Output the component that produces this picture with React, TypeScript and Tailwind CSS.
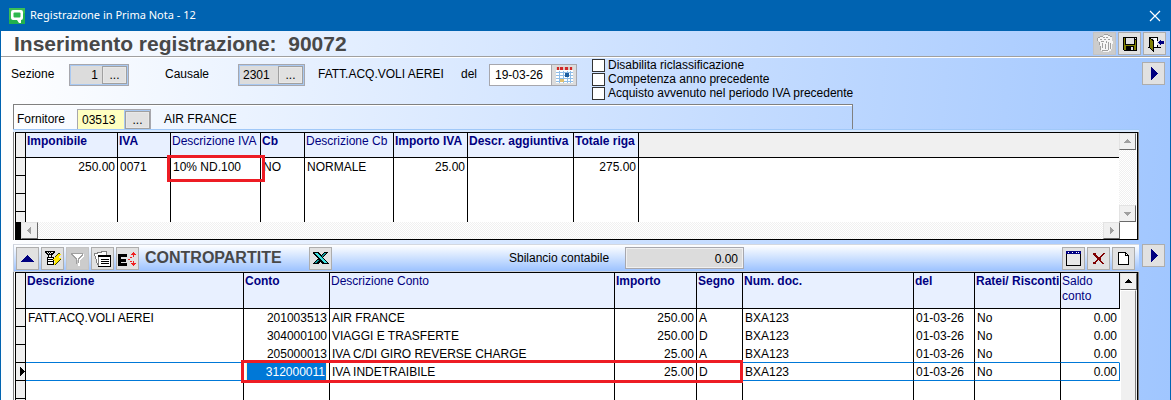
import type { ReactNode } from 'react';
import clsx from 'clsx';

type Column = {
  title: string;
  width: string;
  bold?: boolean;
  right?: boolean;
};

const ivaColumns: Column[] = [
  { title: 'Imponibile', width: 'w-[92px]', bold: true, right: true },
  { title: 'IVA', width: 'w-[53px]', bold: true },
  { title: 'Descrizione IVA', width: 'w-[90px]' },
  { title: 'Cb', width: 'w-[44px]', bold: true },
  { title: 'Descrizione Cb', width: 'w-[89px]' },
  { title: 'Importo IVA', width: 'w-[74px]', bold: true, right: true },
  { title: 'Descr. aggiuntiva', width: 'w-[106px]', bold: true },
  { title: 'Totale riga', width: 'w-[65px]', bold: true, right: true },
];

const ivaRow = ['250.00', '0071', '10% ND.100', 'NO', 'NORMALE', '25.00', '', '275.00'];

const contoColumns: Column[] = [
  { title: 'Descrizione', width: 'w-[218px]', bold: true },
  { title: 'Conto', width: 'w-[86px]', bold: true, right: true },
  { title: 'Descrizione Conto', width: 'w-[285px]' },
  { title: 'Importo', width: 'w-[82px]', bold: true, right: true },
  { title: 'Segno', width: 'w-[46px]', bold: true },
  { title: 'Num. doc.', width: 'w-auto', bold: true },
  { title: 'del', width: 'w-[61px]', bold: true },
  { title: 'Ratei/ Risconti', width: 'w-[86px]', bold: true },
  { title: 'Saldo conto', width: 'w-[59px]', right: true },
];

const contoRows = [
  ['FATT.ACQ.VOLI AEREI', '201003513', 'AIR FRANCE', '250.00', 'A', 'BXA123', '01-03-26', 'No', '0.00'],
  ['', '304000100', 'VIAGGI E TRASFERTE', '250.00', 'D', 'BXA123', '01-03-26', 'No', '0.00'],
  ['', '205000013', 'IVA C/DI GIRO REVERSE CHARGE', '25.00', 'A', 'BXA123', '01-03-26', 'No', '0.00'],
  ['', '312000011', 'IVA INDETRAIBILE', '25.00', 'D', 'BXA123', '01-03-26', 'No', '0.00'],
];

const selectedRow = 3;

const Icon = ({ children, size = 19 }: { children: ReactNode; size?: number }) => (
  <svg width={size} height={size} viewBox={`0 0 ${size} ${size}`} shapeRendering="crispEdges" fill="none" aria-hidden="true">
    {children}
  </svg>
);

const ToolButton = ({ label, disabled, children }: { label: string; disabled?: boolean; children: ReactNode }) => (
  <button
    type="button"
    aria-label={label}
    disabled={disabled}
    className={clsx(
      'flex h-[23px] w-[23px] shrink-0 items-center justify-center border',
      disabled ? 'border-[#c4c4c4] bg-[#cccccc]' : 'border-[#adadad] bg-[#e1e1e1]'
    )}
  >
    {children}
  </button>
);

const NextButton = ({ label }: { label: string }) => (
  <ToolButton label={label}>
    <Icon>
      <path d="M7 3h1v1h1v1h1v1h1v1h1v1h1v1h1v1h-1v1h-1v1h-1v1h-1v1h-1v1h-1v1h-1z" fill="#000080" />
    </Icon>
  </ToolButton>
);

const DotsButton = ({ label }: { label: string }) => (
  <button
    type="button"
    aria-label={label}
    className="w-[25px] shrink-0 border border-[#a0a0a0] bg-[#e1e1e1] text-center leading-[16px] outline outline-1 -outline-offset-2 outline-[#e8e8e8]"
  >
    ...
  </button>
);

const ScrollButton = ({ dir, active }: { dir: 'up' | 'down' | 'left' | 'right'; active?: boolean }) => {
  const shapes = {
    up: 'M7 5h1v1h1v1h1v1h1v1H4V8h1V7h1V6h1z',
    down: 'M4 6h7v1h-1v1H9v1H8v1H7V9H6V8H5V7H4z',
    left: 'M8 4h1v7H8v-1H7V9H6V8H5V7h1V6h1V5h1z',
    right: 'M6 4h1v1h1v1h1v1h1v1H9v1H8v1H7v1H6z',
  };
  return (
    <button
      type="button"
      aria-label={`Scorri ${dir}`}
      className="h-[17px] w-[17px] shrink-0 border border-t-[#e3e3e3] border-r-[#696969] border-b-[#696969] border-l-[#e3e3e3] bg-[#f0f0f0]"
    >
      <Icon size={15}>
        <path d={shapes[dir]} fill={active ? '#000000' : '#a0a0a0'} />
      </Icon>
    </button>
  );
};

const track = 'bg-[repeating-conic-gradient(#f0f0f0_0_25%,#ffffff_0_50%)] bg-[length:2px_2px]';

const GridFrame = ({ children, fill }: { children: ReactNode; fill?: boolean }) => (
  <div
    className={clsx(
      'mr-[31px] ml-3 flex border-x border-l-[#808080] border-r-[#808080] bg-white pl-px',
      fill && 'min-h-0 flex-1 overflow-hidden'
    )}
  >
    <div className={clsx('flex min-w-0 flex-1 flex-col border-x border-t border-black', !fill && 'border-b')}>{children}</div>
  </div>
);

const GridHead = ({ columns, height, filler }: { columns: Column[]; height: string; filler?: boolean }) => (
  <>
    <colgroup>
      <col className="w-[10px]" />
      {columns.map((c) => (
        <col key={c.title} className={c.width} />
      ))}
      {filler && <col className="w-auto" />}
    </colgroup>
    <thead>
      <tr className={height}>
        <td className="border-r border-b border-black bg-[#f0f0f0]" />
        {columns.map((c) => (
          <th
            key={c.title}
            className={clsx(
              'border-r border-b border-black bg-[#e8f0ff] pt-px pl-px text-left align-top leading-[15px] text-[#000080]',
              c.bold ? 'font-bold' : 'font-normal',
              c.title !== 'Saldo conto' && 'whitespace-nowrap'
            )}
          >
            {c.title}
          </th>
        ))}
        {filler && <td className="border-b border-black bg-[#f0f0f0]" />}
      </tr>
    </thead>
  </>
);

const Selector = ({ current }: { current?: boolean }) => (
  <td className="border-r border-b border-black bg-[#f0f0f0]">
    {current && (
      <svg width="5" height="9" viewBox="0 0 5 9" className="ml-1" shapeRendering="crispEdges" aria-hidden="true">
        <path d="M0 0h1v1h1v1h1v1h1v1h1v1H4v1H3v1H2v1H1v1H0z" fill="#000" />
      </svg>
    )}
  </td>
);

const IvaGrid = () => (
  <GridFrame>
    <div className="flex">
      <table className="min-w-0 flex-1 table-fixed border-separate border-spacing-0">
        <GridHead columns={ivaColumns} height="h-[25px]" filler />
        <tbody>
          <tr className="h-[18px]">
            <Selector />
            {ivaRow.map((text, i) => (
              <td
                key={i}
                className={clsx('relative border-r border-black px-[2px] leading-[18px] whitespace-nowrap', ivaColumns[i].right && 'text-right')}
              >
                {text}
                {i === 2 && (
                  <span className="pointer-events-none absolute -top-[3px] -left-1 z-10 h-[27px] w-[98px] border-[3px] border-[#ed1c24]" />
                )}
              </td>
            ))}
            <td />
          </tr>
          {['h-[18px]', 'h-[18px]', 'h-[10px]'].map((height, r) => (
            <tr key={r} className={height}>
              <td className={clsx('border-r border-black bg-[#f0f0f0]', r < 2 && 'border-b')} />
              {ivaColumns.map((c) => (
                <td key={c.title} className="border-r border-black" />
              ))}
              <td />
            </tr>
          ))}
        </tbody>
      </table>
      <div className={clsx('mr-px flex w-[17px] flex-col justify-between', track)}>
        <ScrollButton dir="up" />
        <ScrollButton dir="down" />
      </div>
    </div>
    <div className="flex">
      <div className="w-[5px] bg-black" />
      <div className={clsx('flex flex-1 justify-between', track)}>
        <ScrollButton dir="left" />
        <ScrollButton dir="right" />
      </div>
      <div className="w-[17px]" />
    </div>
  </GridFrame>
);

const ContoGrid = () => (
  <GridFrame fill>
    <div className="flex min-h-0 flex-1">
      <table className="min-w-0 flex-1 table-fixed self-start border-separate border-spacing-0">
        <GridHead columns={contoColumns} height="h-[36px]" />
        <tbody>
          {contoRows.map((row, r) => (
            <tr key={r} className="h-[18px]">
              <Selector current={r === selectedRow} />
              {row.map((text, i) => (
                <td
                  key={i}
                  className={clsx(
                    'relative border-r px-[2px] align-top whitespace-nowrap',
                    r === selectedRow && i === 1 ? 'leading-[17px]' : 'pt-[2px] leading-[15px]',
                    contoColumns[i].right && 'text-right',
                    (r === selectedRow || r === selectedRow - 1) && 'border-b border-b-[#0078d7]',
                    i < row.length - 1 ? 'border-r-black' : r === selectedRow ? 'border-r-[#0078d7]' : 'border-r-white'
                  )}
                >
                  {r === selectedRow && i === 1 ? (
                    <>
                      <input
                        aria-label="Conto"
                        defaultValue={text}
                        className="block h-[17px] w-full border-x border-[#fff8c8] bg-[#0078d7] pt-px pr-px text-right text-white outline-none"
                      />
                      <span className="pointer-events-none absolute -top-[3px] -left-[3px] z-10 h-[23px] w-[502px] border-[3px] border-[#ed1c24]" />
                    </>
                  ) : (
                    text
                  )}
                </td>
              ))}
            </tr>
          ))}
          {[0, 1].map((r) => (
            <tr key={r} className="h-[18px]">
              <Selector />
              {contoColumns.map((c, i) => (
                <td key={c.title} className={clsx('border-r', i < contoColumns.length - 1 ? 'border-black' : 'border-white')} />
              ))}
            </tr>
          ))}
        </tbody>
      </table>
      <div className="flex w-[17px] flex-col bg-[#f0f0f0]">
        <ScrollButton dir="up" active />
        <div className="mr-px flex-1 border-x border-t border-t-white border-r-[#808080] border-l-white bg-[#f0f0f0]" />
      </div>
    </div>
  </GridFrame>
);

const TitleBar = () => (
  <header className="flex h-[31px] items-center bg-[#0063b1] pl-2 text-white">
    <svg width="16" height="16" viewBox="0 0 16 16" aria-hidden="true">
      <rect width="16" height="16" fill="#22b14c" />
      <path d="M0 0h16v5L0 12z" fill="#4cc65a" opacity="0.6" />
      <path d="M4 2h8q2 0 2 2v6q0 2-2 2v3h-2l-2-3H4q-2 0-2-2V4q0-2 2-2z" fill="#fff" />
      <rect x="4.500" y="4.500" width="7" height="5" rx="1" fill="#2fb84f" />
    </svg>
    <h1 className="ml-[5px] font-['Noto_Sans',sans-serif] text-[11px]">Registrazione in Prima Nota - 12</h1>
    <button type="button" aria-label="Chiudi" className="mr-[9px] ml-auto">
      <svg width="12" height="12" viewBox="0 0 12 12" stroke="#fff" strokeWidth="1.200" aria-hidden="true">
        <path d="M1 1l10 10M11 1L1 11" />
      </svg>
    </button>
  </header>
);

const PageHeader = () => (
  <div className="flex h-[27px] items-center justify-between border-b border-white pl-[13px] shadow-[inset_0_-1px_0_#a0a0a0]">
    <h2 className="text-[21px] leading-[26px] font-bold whitespace-pre text-[#484848]">Inserimento registrazione:  90072</h2>
    <div className="mr-1 flex gap-[2px] pb-[2px]">
      <ToolButton label="Elimina" disabled>
        <Icon>
          <path d="M3 4h2V3h2V2h2V1h4v1h2v1h2v4h1v3h-1v5h-1v2h-2v1H8v-1H6v-4H5V9H4V7H3z" fill="#f6f6f6" />
          <path
            d="M3 3h2v1H3zM5 2h3v1H5zM9 0h4v1H9zM13 1h2v1h-2zM15 2h2v1h-2zM2 4h1v3H2zM5 5h2v1H5zM8 3h2v1H8zM11 3h2v1h-2zM9 5h2v1H9zM13 5h2v1h-2zM6 7h3v1H6zM11 7h1v2h-1zM4 8h1v3H4zM7 9h1v5H7zM10 10h1v5h-1zM13 8h1v8h-1zM15 9h1v6h-1zM5 12h1v4H5zM7 16h6v1H7z"
            fill="#a0a0a0"
          />
        </Icon>
      </ToolButton>
      <ToolButton label="Salva">
        <Icon>
          <path d="M3 3h14v14H4v-1H3z" fill="#000" />
          <path d="M4 4h1v12H4zM5 11h11v1H5zM15 6h1v10h-1zM5 12h1v4H5zM14 12h1v4h-1z" fill="#808000" />
          <path d="M6 4h8v6H6zM15 4h1v1h-1z" fill="#e1e1e1" />
          <path d="M11 13h2v3h-2z" fill="#e1e1e1" />
        </Icon>
      </ToolButton>
      <ToolButton label="Esci">
        <Icon>
          <path d="M4 3h9v4h-1V4H5v9h7v-2h1v2h3v1H3v-1h1z" fill="#000" />
          <path d="M9 4h3v9H9z" fill="#fff" />
          <path d="M4 3h1v1h1v1h2v1h1v12H8v-1H7v-1H6v-1H5v-1H4z" fill="#000" />
          <path d="M5 5h1v1h1v1h1v9H7v-1H6v-1H5z" fill="#808000" />
          <path d="M13 8h1V7h1V6h1v1h3v3h-3v1h-1v-1h-1V9h-1z" fill="#000080" />
        </Icon>
      </ToolButton>
    </div>
  </div>
);

const LookupField = ({ id, value, className }: { id: string; value: string; className?: string }) => (
  <div className="flex h-[22px] border border-[#a7a7ad] bg-[#a9c9f2] p-px">
    <input id={id} defaultValue={value} className={clsx('bg-[#dcdcdc] outline-none', className)} />
    <DotsButton label={`Cerca ${id}`} />
  </div>
);

const options = ['Disabilita riclassificazione', 'Competenza anno precedente', 'Acquisto avvenuto nel periodo IVA precedente'];

const FilterRow = () => (
  <div className="flex h-[46px] items-start pl-[10px] whitespace-nowrap">
    <div className="flex pt-[6px] leading-[20px]">
      <label htmlFor="sezione" className="w-[58px]">
        Sezione
      </label>
      <LookupField id="sezione" value="1" className="w-[31px] pr-1 text-right" />
      <label htmlFor="causale" className="ml-9 w-[73px]">
        Causale
      </label>
      <LookupField id="causale" value="2301" className="w-[38px] pl-[3px]" />
      <span className="ml-[13px] w-[143px]">FATT.ACQ.VOLI AEREI</span>
      <label htmlFor="data" className="w-7">
        del
      </label>
      <div className="flex h-[22px] border border-[#a7a7ad] bg-[#dcdcdc]">
        <input id="data" defaultValue="19-03-26" className="w-[61px] bg-white pl-[5px] outline-none" />
        <button type="button" aria-label="Calendario" className="flex w-[25px] items-center justify-center border-l border-[#a7a7ad]">
          <Icon size={18}>
            <path d="M1 1h17v16H1z" fill="#fff" />
            <path d="M1 1h17v3H1z" fill="#d9c8c0" />
            <path d="M2 1h2v3H2zM5 1h3v3H5zM10 1h3v3h-3zM15 1h2v3h-2z" fill="#d02828" />
            <path d="M1 6h17v1H1zM1 9h17v1H1zM1 12h17v1H1zM1 15h17v1H1zM4 5h1v12H4zM8 5h1v12H8zM12 5h1v12h-1zM15 5h1v12h-1z" fill="#8fbde8" />
            <path d="M10 7h4v4h-4z" fill="#1f5f9f" />
            <path d="M5 13h4v3H5z" fill="#e0c070" />
          </Icon>
        </button>
      </div>
    </div>
    <div className="ml-[15px] flex flex-col">
      {options.map((option) => (
        <label key={option} className="flex h-[14px] items-center gap-[3px] leading-[14px]">
          <input type="checkbox" className="h-[13px] w-[13px] appearance-none border border-[#333333] bg-white" />
          {option}
        </label>
      ))}
    </div>
    <div className="mt-1 mr-[5px] ml-auto">
      <NextButton label="Avanti" />
    </div>
  </div>
);

const SupplierRow = () => (
  <div className="mr-[31px] ml-3 border-b border-[#d8e8fc]">
    <div className="flex h-[25px] w-[840px] max-w-full items-end border-x border-t border-[#808080] pl-[3px] leading-[20px] shadow-[inset_0_1px_0_#ffffff]">
      <label htmlFor="fornitore" className="w-[60px]">
        Fornitore
      </label>
      <div className="flex h-5 border-x border-t border-[#a7a7ad] bg-[#a9c9f2]">
        <input id="fornitore" defaultValue="03513" className="w-[46px] bg-[#ffffc0] pl-1 outline-none" />
        <div className="ml-px flex pt-px">
          <DotsButton label="Cerca fornitore" />
        </div>
      </div>
      <span className="ml-[13px]">AIR FRANCE</span>
    </div>
    <div className="h-[2px] border-t border-[#a0c8f8] bg-[#d8e8fc]" />
  </div>
);

const CounterpartToolbar = () => (
  <div className="mt-1 mr-[5px] ml-3 flex items-start gap-[3px]">
    <div className="flex h-[28px] flex-1 items-center gap-[2px] border-y border-l border-t-[#d4d8e0] border-b-[#c8d0dc] border-l-[#c8d0dc] bg-linear-to-b from-white to-[#9cc2ff] px-[2px]">
      <ToolButton label="Comprimi">
        <Icon>
          <path d="M9 6h1v1h1v1h1v1h1v1h1v1h1v1h1v1H3v-1h1v-1h1v-1h1V9h1V8h1V7h1z" fill="#000080" />
        </Icon>
      </ToolButton>
      <ToolButton label="Filtro rapido">
        <Icon>
          <path d="M2 2h10v2h-1v1h-1v1H9v2h2v8H4V8h1V6H4V5H3V4H2z" fill="#000" />
          <path d="M4 3h1v1H4zM6 3h1v1H6zM8 3h2v1H8zM5 4h1v1H5zM7 4h1v1H7zM6 6h2v2H6z" fill="#e8e8e8" />
          <path d="M5 9h5v1H5zM5 11h5v1H5zM5 13h5v2H5z" fill="#fff" />
          <path d="M15 5h3v1h-1v1h-1v2h2v1h-1v1h-1v1h-1v1h-1v1h-1v1h-1v1h-1v-2h1v-2h-1v-1h-1v-1h1V9h1V8h1V7h1V6h1z" fill="#ffe800" />
          <path d="M15 4h2v1h-2zM14 5h1v1h-1zM13 6h1v1h-1zM12 7h1v1h-1zM17 10h1v1h-1zM16 11h1v1h-1zM15 12h1v1h-1zM14 13h1v1h-1zM13 14h1v1h-1zM12 15h1v1h-1z" fill="#404000" />
        </Icon>
      </ToolButton>
      <ToolButton label="Filtro" disabled>
        <Icon>
          <path d="M4 5h12v2l-4 4v6h-2v-6L4 7z" fill="#fff" />
          <path d="M3 4h12v1H3zM4 5h1v1h1v1h1v1h1v1h1v6H8v-5H7V9H6V8H5V7H4V6H3V5zM14 5v1h-1v1h-1v1h-1v1h-1v5h1v-4h1V9h1V8h1V7h1V5z" fill="#a0a0a0" />
        </Icon>
      </ToolButton>
      <ToolButton label="Schede">
        <Icon>
          <path d="M1 4h3V3h4V2h6v4h-1V3H9v1H5v1H2v2h1v3h1v4h1v2H4v-2H3v-4H2V7H1z" fill="#808080" />
          <path d="M9 3h4v3H9zM2 5h3V4h4v2H5v8H4v-4H3V7H2z" fill="#fff" />
          <path d="M5 7h13v10H5z" fill="#808080" />
          <path d="M5 6h13v2H5z" fill="#000" />
          <path d="M6 8h11v9H6z" fill="#fff" />
          <path d="M8 10h8v1H8zM8 12h8v1H8zM8 14h8v1H8z" fill="#000" />
          <path d="M5 17h13v1H5zM17 8h1v9h-1z" fill="#000" />
        </Icon>
      </ToolButton>
      <ToolButton label="Espandi">
        <Icon>
          <path d="M0 5h9v3H3v2h5v3H3v1h6v3H0z" fill="#000" />
          <path d="M15 3h1v1h1v1h1v1h-2v2h-1V6h-2V5h1V4h1zM12 8h2v1h-2zM10 10h2v1h-2zM12 12h2v1h-2zM15 12h1v2h2v1h-1v1h-1v1h-1v-1h-1v-1h-1v-1h2z" fill="#f02020" />
        </Icon>
      </ToolButton>
      <h3 className="ml-1 w-[162px] text-[16px] leading-[20px] font-bold text-[#484848]">CONTROPARTITE</h3>
      <ToolButton label="Esporta in Excel">
        <Icon>
          <path d="M2 3h6v1h1v1h1v1h1V5h1V4h1V3h4v1h-1v1h-1v1h-1v1h-1v1h-1v1h1v1h1v1h1v1h1v1h1v1h1v1h-7v-1h-1v-1H9v1H8v1H2v-1h1v-1h1v-1h1v-1h1v-1h1V9H6V8H5V7H4V6H3V5H2z" fill="#000" />
          <path d="M4 4h3v1h1v1h1v1h1v1h1v1h1v1h1v1h1v1h1v1h1v1h-3v-1h-1v-1h-1v-1h-1v-1H9V9H8V8H7V7H6V6H5V5H4z" fill="#40e0e0" />
          <path d="M13 4h2v1h-1v1h-1v1h-1v1h-1V6h1V5h1zM6 11h2v1H7v1H6v1H4v-1h1v-1h1z" fill="#109898" />
        </Icon>
      </ToolButton>
      <label htmlFor="sbilancio" className="ml-[175px] w-[114px] whitespace-nowrap">
        Sbilancio contabile
      </label>
      <input
        id="sbilancio"
        readOnly
        value="0.00"
        className="h-[22px] w-[119px] border border-[#a7a7ad] bg-[#dcdcdc] pt-[2px] pr-[5px] text-right outline outline-1 -outline-offset-2 outline-[#f0f0f0]"
      />
      <div className="ml-auto flex gap-[2px] pr-[2px]">
        <ToolButton label="Finestra">
          <Icon>
            <path d="M2 2h15v15H2z" fill="#000" />
            <path d="M2 2h15v3H2z" fill="#000080" />
            <path d="M3 5h13v11H3z" fill="#e8e8e8" />
            <path d="M4 3h1v1H4zM8 3h1v1H8zM12 3h1v1h-1zM14 3h1v1h-1z" fill="#fff" />
          </Icon>
        </ToolButton>
        <ToolButton label="Elimina riga">
          <Icon>
            <path d="M4 4h2v1h1v1h1v1h1v1h2V7h1V6h1V5h1V4h2v1h-1v1h-1v1h-1v1h-1v1h-1v2h1v1h1v1h1v1h1v1h-2v-1h-1v-1h-1v-1h-1v-1H9v1H8v1H7v1H6v1H4v-1h1v-1h1v-1h1v-1h1V9H7V8H6V7H5V6H4z" fill="#800000" />
            <path d="M4 4h3v2H4zM4 13h3v2H4zM8 8h4v3H8z" fill="#800000" />
          </Icon>
        </ToolButton>
        <ToolButton label="Nuova riga">
          <Icon>
            <path d="M4 3h8v1h1v1h1v1h1v10H4z" fill="#000" />
            <path d="M5 4h6v3h3v8H5zM12 5h1v1h-1z" fill="#fff" />
          </Icon>
        </ToolButton>
      </div>
    </div>
    <NextButton label="Avanti contropartite" />
  </div>
);

export default function App() {
  return (
    <div className="flex h-screen flex-col overflow-hidden border-x border-[#0063b1] bg-linear-[95deg,#ffffff,#a0c6ff] font-['Liberation_Sans',Arial,sans-serif] text-[12px] text-black">
      <TitleBar />
      <PageHeader />
      <FilterRow />
      <SupplierRow />
      <IvaGrid />
      <CounterpartToolbar />
      <ContoGrid />
    </div>
  );
}
